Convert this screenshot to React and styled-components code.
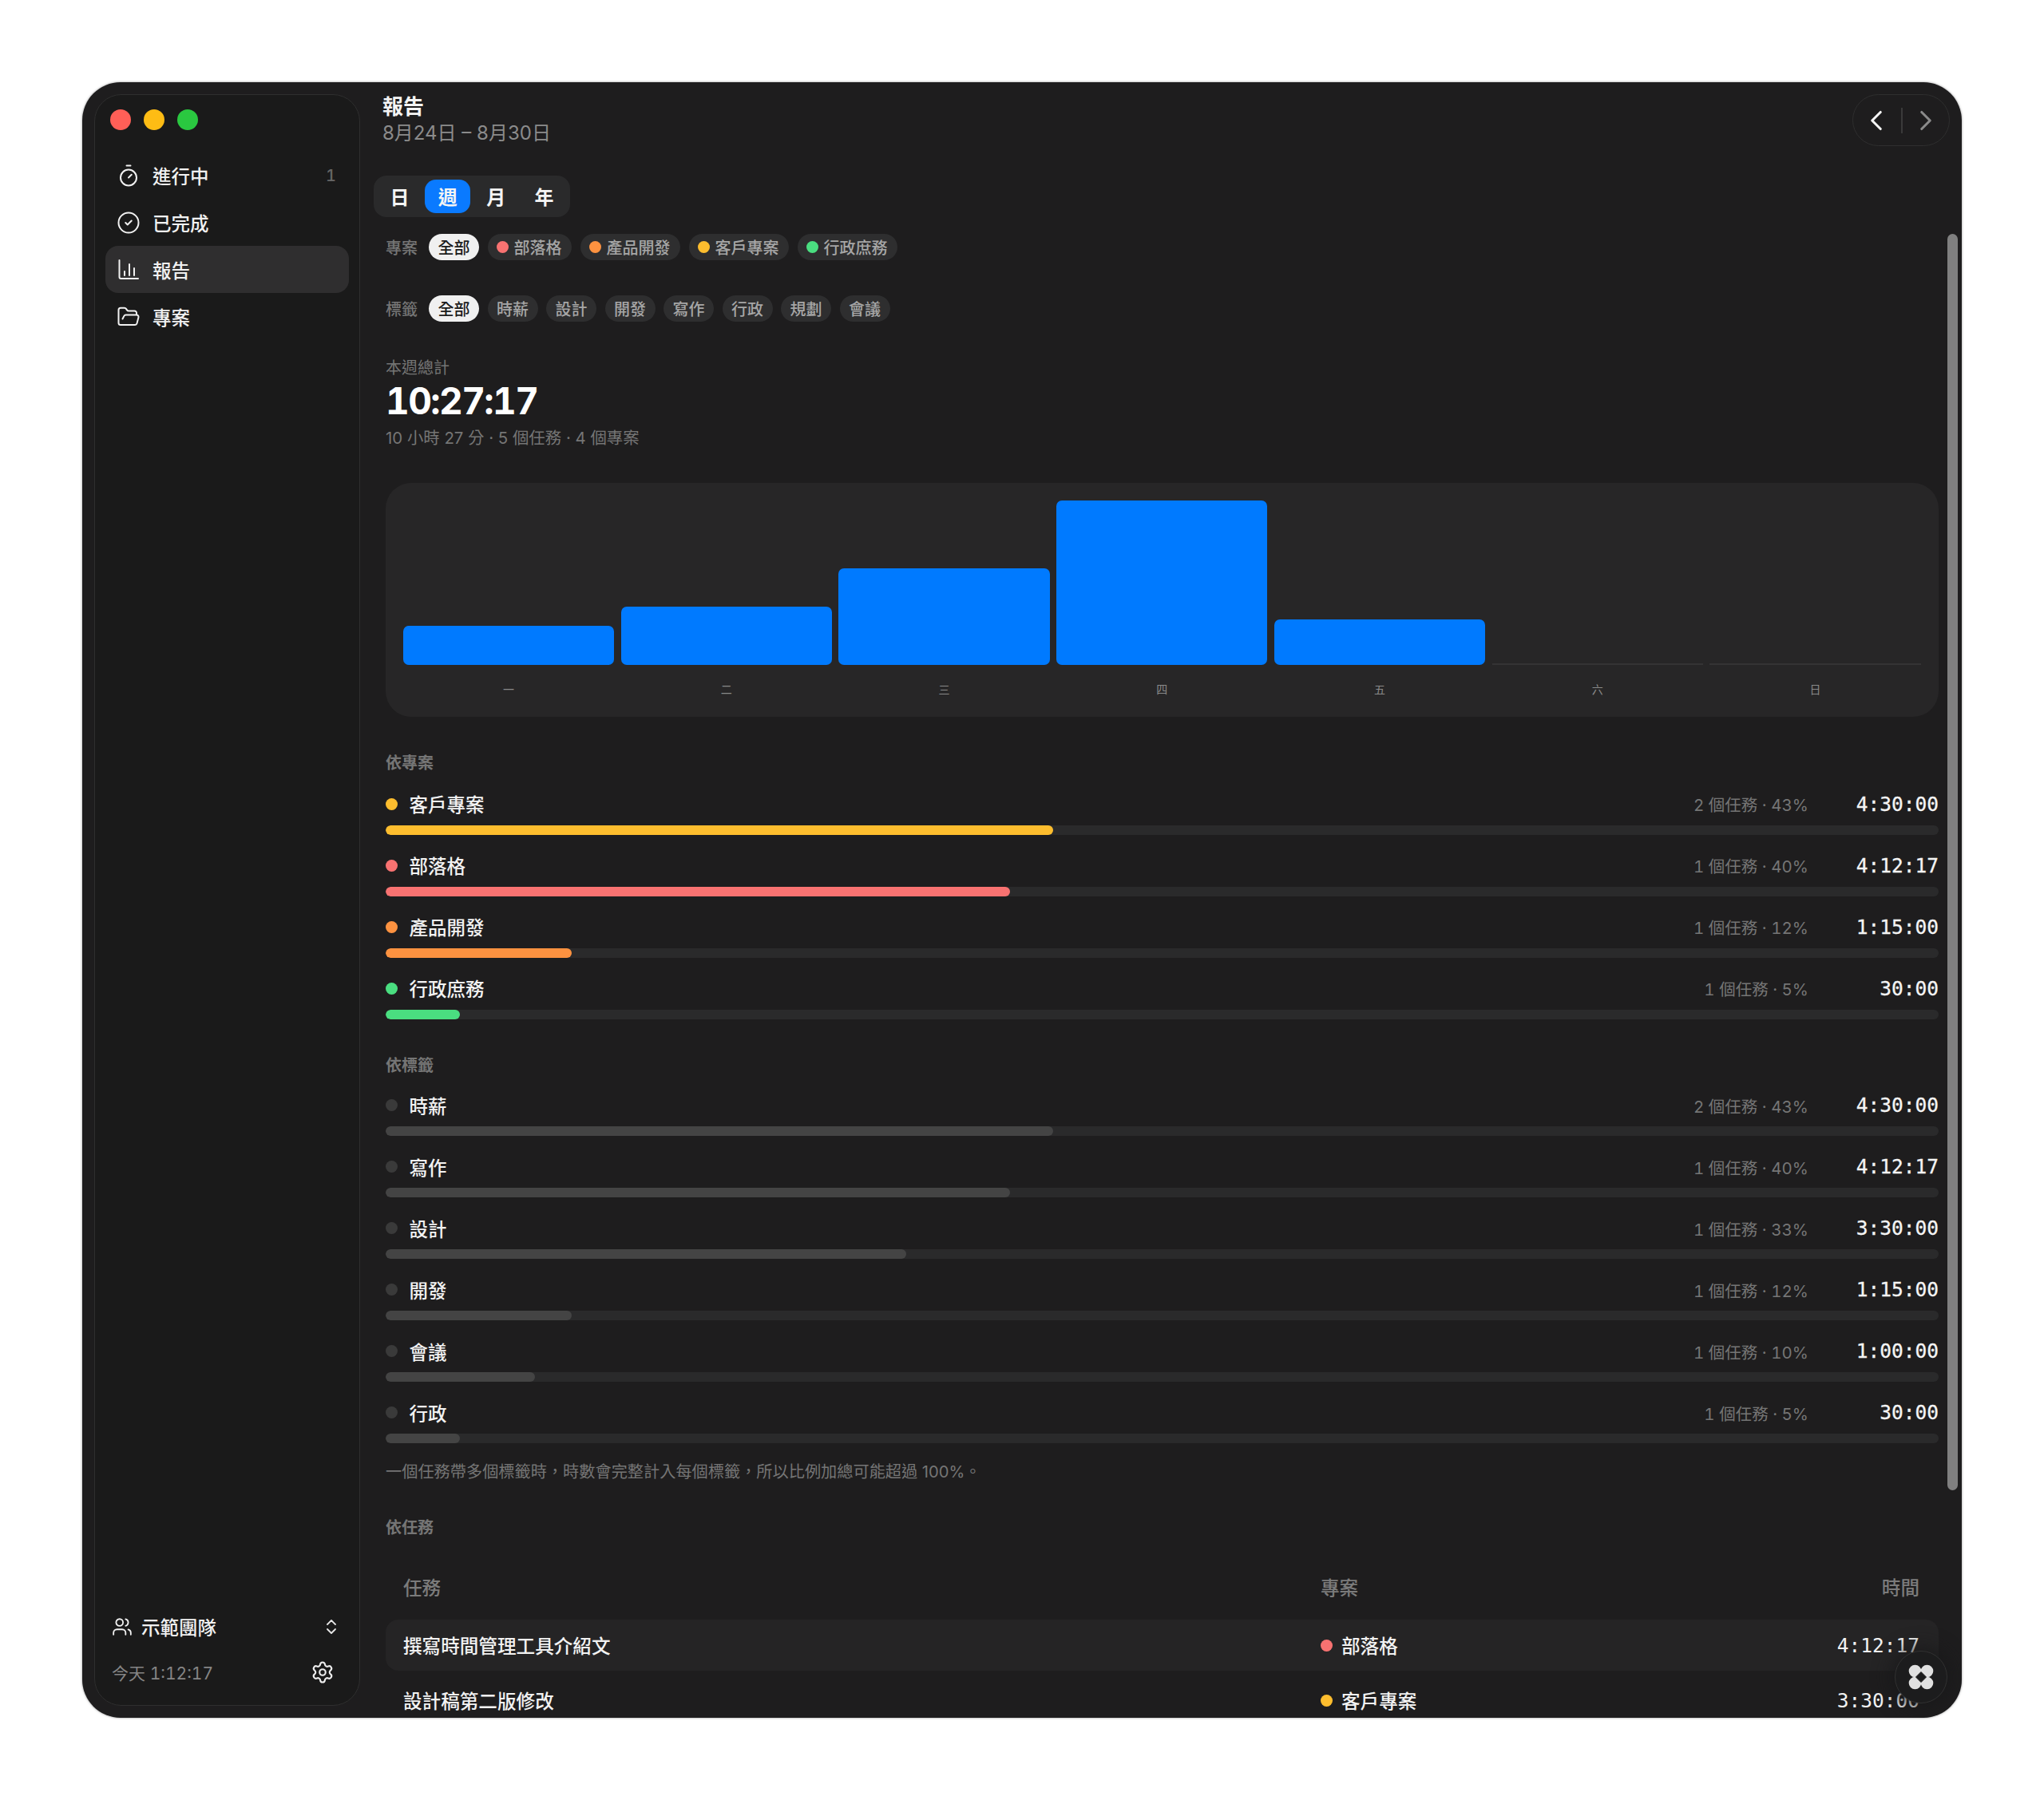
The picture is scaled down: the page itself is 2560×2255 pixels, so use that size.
import React from 'react';
import styled, {createGlobalStyle} from 'styled-components';
import {
	Timer,
	CircleCheck,
	FolderOpen,
	Users,
	ChevronsUpDown,
	Settings,
	ChevronLeft,
	ChevronRight
} from 'lucide-react';

const GlobalStyle = createGlobalStyle`
	html, body {
		margin: 0;
		background: #fff;
	}
	body {
		font-family: Inter, "Noto Sans CJK TC", sans-serif;
	}
`;

const Page = styled.div`
	padding: 103px;
	box-sizing: border-box;
	height: 2255px;
`;

const Window = styled.div`
	position: relative;
	display: flex;
	width: 2354px;
	height: 2049px;
	padding: 15px 0 0 15px;
	box-sizing: border-box;
	border-radius: 48px;
	overflow: hidden;
	background: #1e1d1e;
	box-shadow: 0 0 3px rgba(0, 0, 0, 0.45);
`;

const Sidebar = styled.aside`
	display: flex;
	flex-direction: column;
	flex: none;
	width: 333px;
	height: 2019px;
	padding: 0 13px 0;
	box-sizing: border-box;
	border: 1.5px solid #2f2f2f;
	border-radius: 34px;
	background: #1a1a1a;
`;

const Lights = styled.div`
	display: flex;
	gap: 16px;
	padding: 18px 0 0 6px;
`;

const Light = styled.span`
	width: 26px;
	height: 26px;
	border-radius: 50%;
	background: ${props => props.$color};
`;

const NavList = styled.nav`
	display: flex;
	flex-direction: column;
	margin-top: 27px;
`;

const NavItem = styled.div`
	display: flex;
	align-items: center;
	gap: 15px;
	height: 59px;
	padding: 0 16px 0 14px;
	border-radius: 16px;
	font-size: 23.5px;
	font-weight: 500;
	color: #f1f1f1;
	background: ${props => (props.$active ? '#2f2e2f' : 'transparent')};
`;

const NavCount = styled.span`
	margin-left: auto;
	font-size: 20px;
	color: #666;
	font-variant-numeric: tabular-nums;
`;

const SideFooter = styled.div`
	display: flex;
	flex-direction: column;
	margin-top: auto;
	padding: 0 8px 21px 8px;
`;

const TeamRow = styled.div`
	display: flex;
	align-items: center;
	gap: 11px;
	height: 40px;
	font-size: 23.5px;
	font-weight: 500;
	color: #f1f1f1;
`;

const TodayRow = styled.div`
	display: flex;
	align-items: center;
	justify-content: space-between;
	height: 40px;
	margin-top: 17px;
	padding-right: 10px;
	font-size: 21px;
	font-variant-numeric: tabular-nums;
	color: #858585;
`;

const TeamChevrons = styled.span`
	display: flex;
	margin-left: auto;
	margin-right: 2px;
	color: #e6e6e6;
`;

const Main = styled.main`
	flex: 1;
	min-width: 0;
	display: flex;
	flex-direction: column;
	padding: 0 29px 0 17px;
	overflow: hidden;

	& > * {
		flex: none;
	}
`;

const Header = styled.header`
	display: flex;
	justify-content: space-between;
	height: 65px;
	padding-left: 11px;
`;

const Title = styled.h1`
	margin: 0;
	font-size: 26px;
	line-height: 32px;
	font-weight: 700;
	color: #f4f4f4;
`;

const Subtitle = styled.div`
	margin-top: 1px;
	font-size: 24px;
	line-height: 32px;
	color: #8b8b8b;
`;

const Pager = styled.div`
	display: flex;
	align-items: center;
	position: relative;
	left: 14px;
	width: 122px;
	height: 65px;
	box-sizing: border-box;
	border: 1.5px solid #2f2f2f;
	border-radius: 33px;
	padding-left: 8px;
	color: #f4f4f4;
`;

const PagerDivider = styled.span`
	flex: none;
	width: 1.5px;
	height: 32px;
	margin: 0 8px 0 10px;
	background: #3a3a3a;
`;

const Segments = styled.div`
	display: flex;
	gap: 3.5px;
	width: 246px;
	height: 52px;
	margin-top: 37px;
	padding: 5px 4px;
	box-sizing: border-box;
	border-radius: 16px;
	background: #2a2a2b;
`;

const Segment = styled.div`
	flex: 1;
	display: flex;
	align-items: center;
	justify-content: center;
	padding-bottom: 2px;
	border-radius: 14px;
	font-size: 24px;
	font-weight: 600;
	color: #f4f4f4;
	background: ${props => (props.$active ? '#0a7aff' : 'transparent')};
`;

const Body = styled.div`
	display: flex;
	flex-direction: column;
	padding-left: 15px;
`;

const FilterRow = styled.div`
	display: flex;
	align-items: center;
	gap: 10.5px;
	height: 33px;
	margin-top: ${props => props.$top}px;
`;

const FilterLabel = styled.span`
	width: 43.5px;
	font-size: 20px;
	font-weight: 500;
	color: #757575;
`;

const Pill = styled.div`
	display: flex;
	align-items: center;
	gap: 7px;
	height: 33px;
	padding: 0 ${props => (props.$dot ? 12.5 : 11.5)}px 0 ${props => (props.$dot ? 11 : 11.5)}px;
	border-radius: 17px;
	font-size: 20px;
	font-weight: 500;
	color: ${props => (props.$active ? '#1c1c1c' : '#a6a6a6')};
	background: ${props => (props.$active ? '#f0f0f0' : '#2e2e2f')};
`;

const Dot = styled.span`
	flex: none;
	width: 15px;
	height: 15px;
	border-radius: 50%;
	background: ${props => props.$color};
`;

const TotalLabel = styled.div`
	margin-top: 46px;
	font-size: 20px;
	line-height: 24px;
	color: #757575;
`;

const TotalValue = styled.div`
	margin-top: 1px;
	font-size: 46px;
	line-height: 56px;
	font-weight: 700;
	font-variant-numeric: tabular-nums;
	letter-spacing: -1.6px;
	color: #fff;
`;

const TotalNote = styled.div`
	margin-top: 6px;
	font-size: 20.4px;
	line-height: 26px;
	color: #757575;
`;

const ChartCard = styled.div`
	display: grid;
	grid-template-columns: repeat(7, 1fr);
	column-gap: 8.5px;
	height: 293px;
	margin-top: 43px;
	padding: 0 22.5px 0 22px;
	box-sizing: border-box;
	border-radius: 32px;
	background: #272627;
`;

const ChartColumn = styled.div`
	display: flex;
	flex-direction: column;
	justify-content: flex-end;
	align-items: stretch;
	padding-bottom: 22px;
`;

const Bar = styled.div`
	border-radius: ${props => (props.$empty ? 0 : 7)}px;
	background: ${props => (props.$empty ? '#343334' : '#007aff')};
`;

const BarLabel = styled.div`
	margin-top: 19px;
	height: 24px;
	line-height: 24px;
	text-align: center;
	font-size: 14px;
	color: #8a8a8a;
`;

const SectionTitle = styled.div`
	margin-top: ${props => props.$top}px;
	font-size: 20px;
	line-height: 24px;
	font-weight: 600;
	color: #757575;
`;

const StatList = styled.div`
	display: flex;
	flex-direction: column;
	gap: 22.5px;
	margin-top: ${props => props.$top}px;
`;

const StatHead = styled.div`
	display: flex;
	align-items: center;
	height: 32px;
`;

const StatName = styled.span`
	margin-left: 14.5px;
	font-size: 23.5px;
	font-weight: 500;
	color: #f2f2f2;
`;

const StatMeta = styled.span`
	margin-left: auto;
	font-size: 20.5px;
	font-variant-numeric: tabular-nums;
	color: #757575;
`;

const StatTime = styled.span`
	width: 163px;
	text-align: right;
	font-family: "DejaVu Sans Mono", monospace;
	font-size: 24.5px;
	-webkit-text-stroke: 0.3px #f4f4f4;
	color: #f4f4f4;
`;

const Track = styled.div`
	height: 12px;
	margin-top: 10.5px;
	border-radius: 6px;
	overflow: hidden;
	background: #2a2a2b;
`;

const Fill = styled.div`
	height: 100%;
	border-radius: 6px;
	background: ${props => props.$color};
`;

const Footnote = styled.div`
	margin-top: 22px;
	font-size: 20.2px;
	line-height: 28px;
	color: #757575;
`;

const TableRow = styled.div`
	flex: none;
	display: grid;
	grid-template-columns: 1149px 1fr 200px;
	align-items: center;
	height: ${props => (props.$head ? 79 : 64)}px;
	margin-top: ${props => props.$top || 0}px;
	padding: 0 24px ${props => (props.$head ? 3 : 0)}px 22px;
	box-sizing: border-box;
	border-radius: 16px;
	font-size: 23.6px;
	font-weight: 500;
	color: ${props => (props.$head ? '#7b7b7b' : '#f2f2f2')};
	background: ${props => (props.$shade ? '#252425' : 'transparent')};
`;

const ProjectCell = styled.div`
	display: flex;
	align-items: center;
	gap: 11px;
`;

const TimeCell = styled.div`
	text-align: right;
	font-family: ${props => (props.$head ? 'inherit' : '"DejaVu Sans Mono", monospace')};
	font-size: ${props => (props.$head ? 23.6 : 24.5)}px;
	font-weight: ${props => (props.$head ? 500 : 400)};
`;

const ScrollThumb = styled.div`
	position: absolute;
	top: 190px;
	right: 5px;
	width: 13px;
	height: 1574px;
	border-radius: 7px;
	background: #808080;
`;

const FloatButton = styled.div`
	position: absolute;
	right: 18px;
	bottom: 18px;
	display: flex;
	align-items: center;
	justify-content: center;
	width: 66px;
	height: 66px;
	box-sizing: border-box;
	border: 1.5px solid #323232;
	border-radius: 50%;
	background: #1c1c1d;
	box-shadow: 0 0 22px 6px rgba(24, 24, 25, 0.75);
`;

const BarsIcon = ({size}) => (
	<svg width={size} height={size} viewBox="0 0 30 30" fill="none" stroke="currentColor" strokeWidth="2" strokeLinecap="round" strokeLinejoin="round">
		<path d="M3.5 3v21a2 2 0 0 0 2 2H27"/>
		<path d="M10 22v-5"/>
		<path d="M16 22V8"/>
		<path d="M22 22v-9"/>
	</svg>
);

const PetalIcon = () => (
	<svg width="32" height="32" viewBox="0 0 32 32" fill="#e0e0e0">
		<circle cx="8.5" cy="8.5" r="7.8"/>
		<circle cx="23.5" cy="8.5" r="7.8"/>
		<circle cx="8.5" cy="23.5" r="7.8"/>
		<circle cx="23.5" cy="23.5" r="7.8"/>
		<path d="M16 9.5 22.5 16 16 22.5 9.5 16z" fill="#1c1c1d" stroke="#1c1c1d" strokeWidth="1" strokeLinejoin="round"/>
	</svg>
);

const navItems = [
	{label: '進行中', icon: <Timer size={30} strokeWidth={1.6}/>, count: 1},
	{label: '已完成', icon: <CircleCheck size={30} strokeWidth={1.6}/>},
	{label: '報告', icon: <BarsIcon size={30}/>, active: true},
	{label: '專案', icon: <FolderOpen size={30} strokeWidth={1.6}/>}
];

const COLORS = {
	blog: '#f87271',
	product: '#fd9240',
	client: '#fdbd2e',
	admin: '#4ade80'
};

const projectPills = [
	{label: '部落格', color: COLORS.blog},
	{label: '產品開發', color: COLORS.product},
	{label: '客戶專案', color: COLORS.client},
	{label: '行政庶務', color: COLORS.admin}
];

const tagPills = ['時薪', '設計', '開發', '寫作', '行政', '規劃', '會議'];

const days = [
	{label: '一', height: 49},
	{label: '二', height: 73},
	{label: '三', height: 121},
	{label: '四', height: 206},
	{label: '五', height: 57},
	{label: '六', height: 2},
	{label: '日', height: 2}
];

const projectStats = [
	{name: '客戶專案', meta: '2 個任務 · 43%', time: '4:30:00', pct: 43, color: COLORS.client},
	{name: '部落格', meta: '1 個任務 · 40%', time: '4:12:17', pct: 40.2, color: COLORS.blog},
	{name: '產品開發', meta: '1 個任務 · 12%', time: '1:15:00', pct: 12, color: COLORS.product},
	{name: '行政庶務', meta: '1 個任務 · 5%', time: '30:00', pct: 4.8, color: COLORS.admin}
];

const tagStats = [
	{name: '時薪', meta: '2 個任務 · 43%', time: '4:30:00', pct: 43},
	{name: '寫作', meta: '1 個任務 · 40%', time: '4:12:17', pct: 40.2},
	{name: '設計', meta: '1 個任務 · 33%', time: '3:30:00', pct: 33.5},
	{name: '開發', meta: '1 個任務 · 12%', time: '1:15:00', pct: 12},
	{name: '會議', meta: '1 個任務 · 10%', time: '1:00:00', pct: 9.6},
	{name: '行政', meta: '1 個任務 · 5%', time: '30:00', pct: 4.8}
];

const StatRows = ({items, top}) => (
	<StatList $top={top}>
		{items.map(item => (
			<div key={item.name}>
				<StatHead>
					<Dot $color={item.color || '#3a3a3a'}/>
					<StatName>{item.name}</StatName>
					<StatMeta>{item.meta}</StatMeta>
					<StatTime>{item.time}</StatTime>
				</StatHead>
				<Track>
					<Fill $color={item.color || '#444'} style={{width: `${item.pct}%`}}/>
				</Track>
			</div>
		))}
	</StatList>
);

export default function App() {
	return (
		<Page>
			<GlobalStyle/>
			<Window>
				<Sidebar>
					<Lights>
						<Light $color="#ff5f57"/>
						<Light $color="#febc14"/>
						<Light $color="#2ac840"/>
					</Lights>
					<NavList>
						{navItems.map(item => (
							<NavItem key={item.label} $active={item.active}>
								{item.icon}
								{item.label}
								{item.count && <NavCount>{item.count}</NavCount>}
							</NavItem>
						))}
					</NavList>
					<SideFooter>
						<TeamRow>
							<Users size={26} strokeWidth={1.7}/>
							示範團隊
							<TeamChevrons><ChevronsUpDown size={24} strokeWidth={1.8}/></TeamChevrons>
						</TeamRow>
						<TodayRow>
							今天 1:12:17
							<Settings size={30} strokeWidth={1.7} color="#ededed"/>
						</TodayRow>
					</SideFooter>
				</Sidebar>
				<Main>
					<Header>
						<div>
							<Title>報告</Title>
							<Subtitle>8月24日 – 8月30日</Subtitle>
						</div>
						<Pager>
							<ChevronLeft size={42} strokeWidth={1.8}/>
							<PagerDivider/>
							<ChevronRight size={42} strokeWidth={1.8} color="#8a8a8a"/>
						</Pager>
					</Header>
					<Segments>
						<Segment>日</Segment>
						<Segment $active>週</Segment>
						<Segment>月</Segment>
						<Segment>年</Segment>
					</Segments>
					<Body>
						<FilterRow $top={21}>
							<FilterLabel>專案</FilterLabel>
							<Pill $active>全部</Pill>
							{projectPills.map(pill => (
								<Pill key={pill.label} $dot>
									<Dot $color={pill.color}/>
									{pill.label}
								</Pill>
							))}
						</FilterRow>
						<FilterRow $top={44}>
							<FilterLabel>標籤</FilterLabel>
							<Pill $active>全部</Pill>
							{tagPills.map(tag => <Pill key={tag}>{tag}</Pill>)}
						</FilterRow>
						<TotalLabel>本週總計</TotalLabel>
						<TotalValue>10:27:17</TotalValue>
						<TotalNote>10 小時 27 分 · 5 個任務 · 4 個專案</TotalNote>
						<ChartCard>
							{days.map(day => (
								<ChartColumn key={day.label}>
									<Bar $empty={day.height < 5} style={{height: day.height}}/>
									<BarLabel>{day.label}</BarLabel>
								</ChartColumn>
							))}
						</ChartCard>
						<SectionTitle $top={46}>依專案</SectionTitle>
						<StatRows items={projectStats} top={23}/>
						<SectionTitle $top={46}>依標籤</SectionTitle>
						<StatRows items={tagStats} top={22}/>
						<Footnote>一個任務帶多個標籤時，時數會完整計入每個標籤，所以比例加總可能超過 100%。</Footnote>
						<SectionTitle $top={44}>依任務</SectionTitle>
						<TableRow $head $top={24}>
							<div>任務</div>
							<div>專案</div>
							<TimeCell $head>時間</TimeCell>
						</TableRow>
						<TableRow $shade>
							<div>撰寫時間管理工具介紹文</div>
							<ProjectCell><Dot $color={COLORS.blog}/>部落格</ProjectCell>
							<TimeCell>4:12:17</TimeCell>
						</TableRow>
						<TableRow $top={5}>
							<div>設計稿第二版修改</div>
							<ProjectCell><Dot $color={COLORS.client}/>客戶專案</ProjectCell>
							<TimeCell>3:30:00</TimeCell>
						</TableRow>
					</Body>
				</Main>
				<ScrollThumb/>
				<FloatButton><PetalIcon/></FloatButton>
			</Window>
		</Page>
	);
}
